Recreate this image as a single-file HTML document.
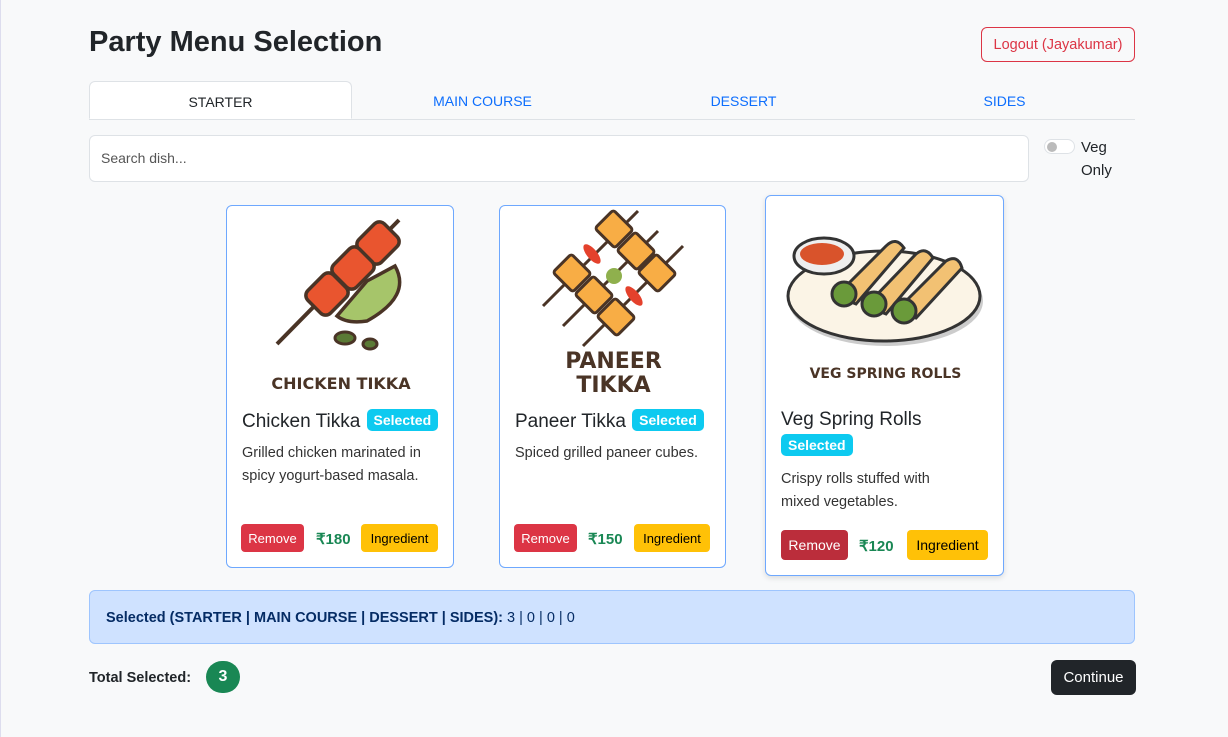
<!DOCTYPE html>
<html><head><meta charset="utf-8"><style>
*{box-sizing:border-box;margin:0;padding:0}
body{width:1228px;height:737px;background:#f8f9fa;font-family:"Liberation Sans",sans-serif;color:#212529;position:relative;overflow:hidden}
.abs{position:absolute}
h1{position:absolute;left:89px;top:26px;font-size:29px;font-weight:700}
.logout{left:981px;top:27px;width:154px;height:35px;border:1px solid #dc3545;border-radius:6px;color:#dc3545;font-size:14.5px;display:flex;align-items:center;justify-content:center}
.tabs{left:89px;top:81px;width:1046px;height:39px;border-bottom:1px solid #dee2e6;display:flex}
.tab{flex:1;text-align:center;line-height:40px;font-size:14px;color:#0d6efd}
.tab.a{background:#fff;color:#212529;border:1px solid #dee2e6;border-bottom-color:#fff;border-radius:6px 6px 0 0}
.search{left:89px;top:135px;width:940px;height:47px;background:#fff;border:1px solid #dee2e6;border-radius:6px;padding-left:11px;line-height:45px;font-size:14px;color:#555}
.tog{left:1044px;top:139px;width:31px;height:15px;border:1px solid #dee2e6;border-radius:8px;background:#fff}
.tog:after{content:"";position:absolute;left:2px;top:2px;width:10px;height:10px;border-radius:50%;background:#bbb}
.veg{left:1081px;top:136px;font-size:15px;line-height:23px}
.card{position:absolute;background:#fff;border:1px solid #6ea8fe;border-radius:6px}
.ttl{position:absolute;font-size:19px;font-weight:500;color:#212529}
.badge{display:inline-block;background:#0dcaf0;color:#fff;font-size:14px;font-weight:700;padding:3px 7px;border-radius:5px;vertical-align:2px;margin-left:1px}
.desc{position:absolute;font-size:14.5px;line-height:23px;color:#333}
.btn{position:absolute;height:28px;border-radius:4px;font-size:13px;display:flex;align-items:center;justify-content:center}
.rm{background:#dc3545;color:#fff}
.ing{background:#ffc107;color:#000}
.pr{position:absolute;color:#198754;font-weight:700;font-size:15px}
.lbl{position:absolute;font-weight:700;color:#4a3426;text-align:center;font-family:"DejaVu Sans",sans-serif}
</style></head><body>
<div class="abs" style="left:0;top:0;width:1px;height:737px;background:#dde"></div>
<h1>Party Menu Selection</h1>
<div class="abs logout">Logout (Jayakumar)</div>
<div class="abs tabs"><div class="tab a">STARTER</div><div class="tab">MAIN COURSE</div><div class="tab">DESSERT</div><div class="tab">SIDES</div></div>
<div class="abs search">Search dish...</div>
<div class="abs tog"></div>
<div class="abs veg">Veg<br>Only</div>

<div class="card" style="left:226px;top:205px;width:228px;height:363px">
<svg class="abs" style="left:40px;top:10px" width="160" height="135" viewBox="0 0 160 135">
<line x1="10" y1="128" x2="132" y2="4" stroke="#4a3426" stroke-width="4"/>
<g fill="#e9552f" stroke="#4a3426" stroke-width="3.5">
<rect x="93" y="11" width="36" height="32" rx="7" transform="rotate(-45 111 27)" />
<rect x="68" y="36" width="36" height="32" rx="7" transform="rotate(-45 86 52)"/>
<rect x="42" y="62" width="36" height="32" rx="7" transform="rotate(-45 60 78)"/>
</g>
<path d="M100 65 L128 50 Q145 80 100 105 Q80 108 70 100 Z" fill="#a6c56a" stroke="#4a3426" stroke-width="3.5"/>
<ellipse cx="78" cy="122" rx="10" ry="6" fill="#5b7a35" stroke="#4a3426" stroke-width="3"/>
<ellipse cx="103" cy="128" rx="7" ry="5" fill="#5b7a35" stroke="#4a3426" stroke-width="3"/>
</svg>
<div class="lbl" style="left:0;width:228px;top:168px;font-size:16px">CHICKEN TIKKA</div>
<div class="ttl" style="left:15px;top:203px">Chicken Tikka <span class="badge">Selected</span></div>
<div class="desc" style="left:15px;top:236px">Grilled chicken marinated in<br>spicy yogurt-based masala.</div>
<div class="btn rm" style="left:14px;top:318px;width:63px">Remove</div>
<div class="pr" style="left:89px;top:324px">₹180</div>
<div class="btn ing" style="left:134px;top:318px;width:77px">Ingredient</div>
</div>

<div class="card" style="left:499px;top:205px;width:227px;height:363px">
<svg class="abs" style="left:38px;top:0" width="150" height="150" viewBox="0 0 150 150">
<g stroke="#4a3426" stroke-width="3"><line x1="5" y1="100" x2="100" y2="5"/><line x1="25" y1="120" x2="120" y2="25"/><line x1="45" y1="140" x2="145" y2="40"/></g>
<g fill="#f8ad45" stroke="#4a3426" stroke-width="3">
<rect x="62" y="10" width="28" height="26" rx="3" transform="rotate(45 76 23)"/>
<rect x="84" y="32" width="28" height="26" rx="3" transform="rotate(45 98 45)"/>
<rect x="105" y="54" width="28" height="26" rx="3" transform="rotate(45 119 67)"/>
<rect x="20" y="54" width="28" height="26" rx="3" transform="rotate(45 34 67)"/>
<rect x="42" y="76" width="28" height="26" rx="3" transform="rotate(45 56 89)"/>
<rect x="64" y="98" width="28" height="26" rx="3" transform="rotate(45 78 111)"/>
</g>
<ellipse cx="54" cy="48" rx="5" ry="12" fill="#e4412c" transform="rotate(-40 54 48)"/>
<ellipse cx="96" cy="90" rx="5" ry="12" fill="#e4412c" transform="rotate(-40 96 90)"/>
<circle cx="76" cy="70" r="8" fill="#8fb04d"/>
</svg>
<div class="lbl" style="left:0;width:227px;top:144px;font-size:22px;line-height:24px">PANEER<br>TIKKA</div>
<div class="ttl" style="left:15px;top:203px">Paneer Tikka <span class="badge">Selected</span></div>
<div class="desc" style="left:15px;top:236px">Spiced grilled paneer cubes.</div>
<div class="btn rm" style="left:14px;top:318px;width:63px">Remove</div>
<div class="pr" style="left:88px;top:324px">₹150</div>
<div class="btn ing" style="left:134px;top:318px;width:76px">Ingredient</div>
</div>

<div class="card" style="left:765px;top:195px;width:239px;height:381px;box-shadow:0 2px 6px rgba(0,0,0,.12)">
<svg class="abs" style="left:20px;top:20px" width="200" height="130" viewBox="0 0 200 130">
<ellipse cx="100" cy="85" rx="97" ry="45" fill="#ccc"/>
<ellipse cx="98" cy="80" rx="96" ry="45" fill="#fbf4e6" stroke="#333" stroke-width="3"/>
<ellipse cx="38" cy="40" rx="30" ry="18" fill="#eee" stroke="#333" stroke-width="3"/>
<ellipse cx="36" cy="38" rx="22" ry="11" fill="#d9532b"/>
<g fill="#f2c173" stroke="#333" stroke-width="3">
<path d="M50 80 L100 30 Q110 20 118 32 L70 88 Z"/>
<path d="M80 90 L130 38 Q140 30 147 42 L100 98 Z"/>
<path d="M110 95 L160 45 Q172 38 176 52 L130 102 Z"/>
</g>
<g fill="#6a9a3a" stroke="#333" stroke-width="3"><circle cx="58" cy="78" r="12"/><circle cx="88" cy="88" r="12"/><circle cx="118" cy="95" r="12"/></g>
</svg>
<div class="lbl" style="left:0;width:239px;top:170px;font-size:14px">VEG SPRING ROLLS</div>
<div class="ttl" style="left:15px;top:213px">Veg Spring Rolls</div>
<div class="abs" style="left:15px;top:238px"><span class="badge" style="margin:0">Selected</span></div>
<div class="desc" style="left:15px;top:272px">Crispy rolls stuffed with<br>mixed vegetables.</div>
<div class="btn rm" style="left:15px;top:334px;width:67px;height:30px;background:#bb2d3b;font-size:14px">Remove</div>
<div class="pr" style="left:93px;top:341px">₹120</div>
<div class="btn ing" style="left:141px;top:334px;width:81px;height:30px;font-size:14px">Ingredient</div>
</div>

<div class="abs" style="left:89px;top:590px;width:1046px;height:54px;background:#cfe2ff;border:1px solid #9ec5fe;border-radius:6px;color:#052c65;font-size:14.5px;padding-left:16px;line-height:54px"><b>Selected (STARTER | MAIN COURSE | DESSERT | SIDES):</b> 3 | 0 | 0 | 0</div>
<div class="abs" style="left:89px;top:670px;font-size:14.5px;font-weight:700">Total Selected:</div>
<div class="abs" style="left:206px;top:661px;width:34px;height:32px;border-radius:16px;background:#198754;color:#fff;font-weight:700;font-size:16px;text-align:center;line-height:32px">3</div>
<div class="abs" style="left:1051px;top:660px;width:85px;height:35px;background:#212529;color:#fff;border-radius:6px;font-size:15px;text-align:center;line-height:35px">Continue</div>
</body></html>
